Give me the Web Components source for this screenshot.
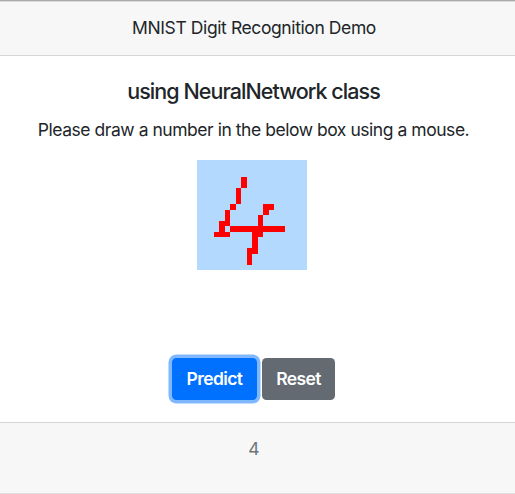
<!DOCTYPE html>
<html lang="en">
<head>
<meta charset="utf-8">
<title>MNIST Digit Recognition Demo</title>
<style>
html,body{margin:0;height:100%;overflow:hidden;background:#fff}
body{font:400 17.5px/26px Inter,"Liberation Sans",sans-serif;color:#212529}
</style>
</head>
<body>
<demo-card>
  <span slot="header">MNIST Digit Recognition Demo</span>
  <span slot="title">using NeuralNetwork class</span>
  <span slot="text">Please draw a number in the below box using a mouse.</span>
  <digit-pad></digit-pad>
  <push-button slot="actions" focused>Predict</push-button>
  <push-button slot="actions" style="--bg:#636a72;--w:73px">Reset</push-button>
  <span slot="footer">4</span>
</demo-card>
<script>
class DemoCard extends HTMLElement{
  constructor(){
    super();
    this.attachShadow({mode:'open'}).innerHTML=`
<style>
:host{display:flex;flex-direction:column;box-sizing:border-box;height:494px;border-top:1px solid #ababab;border-bottom:1px solid #dfdfdf;text-align:center;white-space:nowrap}
header,footer{box-sizing:border-box;background:#f7f7f7;padding-right:7px}
header{height:55px;border-top:1px solid #dadada;border-bottom:1px solid #d6d6d6;padding-top:13px;letter-spacing:-.4px}
main{flex:1;display:flex;flex-direction:column;align-items:center;padding-right:8px}
h5{margin:21px 0 0;font:500 21.5px/28px Inter,"Liberation Sans",sans-serif;letter-spacing:-.94px}
p{margin:12px 0 17px;letter-spacing:-.46px}
.actions{display:flex;gap:5px;margin-top:88px}
footer{height:71px;border-top:1px solid #d6d6d6;padding-top:13px;color:#6c757d}
</style>
<header><slot name="header"></slot></header>
<main><h5><slot name="title"></slot></h5><p><slot name="text"></slot></p><slot></slot>
<div class="actions"><slot name="actions"></slot></div></main>
<footer><slot name="footer"></slot></footer>`;
  }
}
class PushButton extends HTMLElement{
  constructor(){
    super();
    this.attachShadow({mode:'open'}).innerHTML=`
<style>
:host{display:block}
button{display:block;width:var(--w,85px);height:42px;padding:0;border:0;border-radius:4.5px;background:var(--bg,#0070ff);color:#fff;font:600 17.5px/42px Inter,"Liberation Sans",sans-serif;letter-spacing:-.6px}
:host([focused]) button{box-shadow:0 0 0 3.5px #80b8ff}
</style><button><slot></slot></button>`;
  }
}
class DigitPad extends HTMLElement{
  constructor(){
    super();
    // Each stroke block: left, top, right, bottom
    const blocks=[[44,17,50,28],[39,28,44,44],[33,44,39,50],[28,50,33,66],[22,61,28,72],[17,72,33,77],[33,66,88,72],[66,44,77,50],[66,50,72,55],[61,55,66,66],[55,72,66,77],[55,77,61,94],[50,88,55,105]];
    const d=blocks.map(([l,t,r,b])=>`M${l} ${t}H${r}V${b}H${l}Z`).join('');
    this.attachShadow({mode:'open'}).innerHTML=`
<style>:host{display:block;width:110px;height:110px;background:#b3d9ff;margin-right:3px}svg{display:block}</style>
<svg width="110" height="110" shape-rendering="crispEdges"><path fill="#f00" d="${d}"/></svg>`;
  }
}
customElements.define('demo-card',DemoCard);
customElements.define('push-button',PushButton);
customElements.define('digit-pad',DigitPad);
</script>
</body>
</html>
